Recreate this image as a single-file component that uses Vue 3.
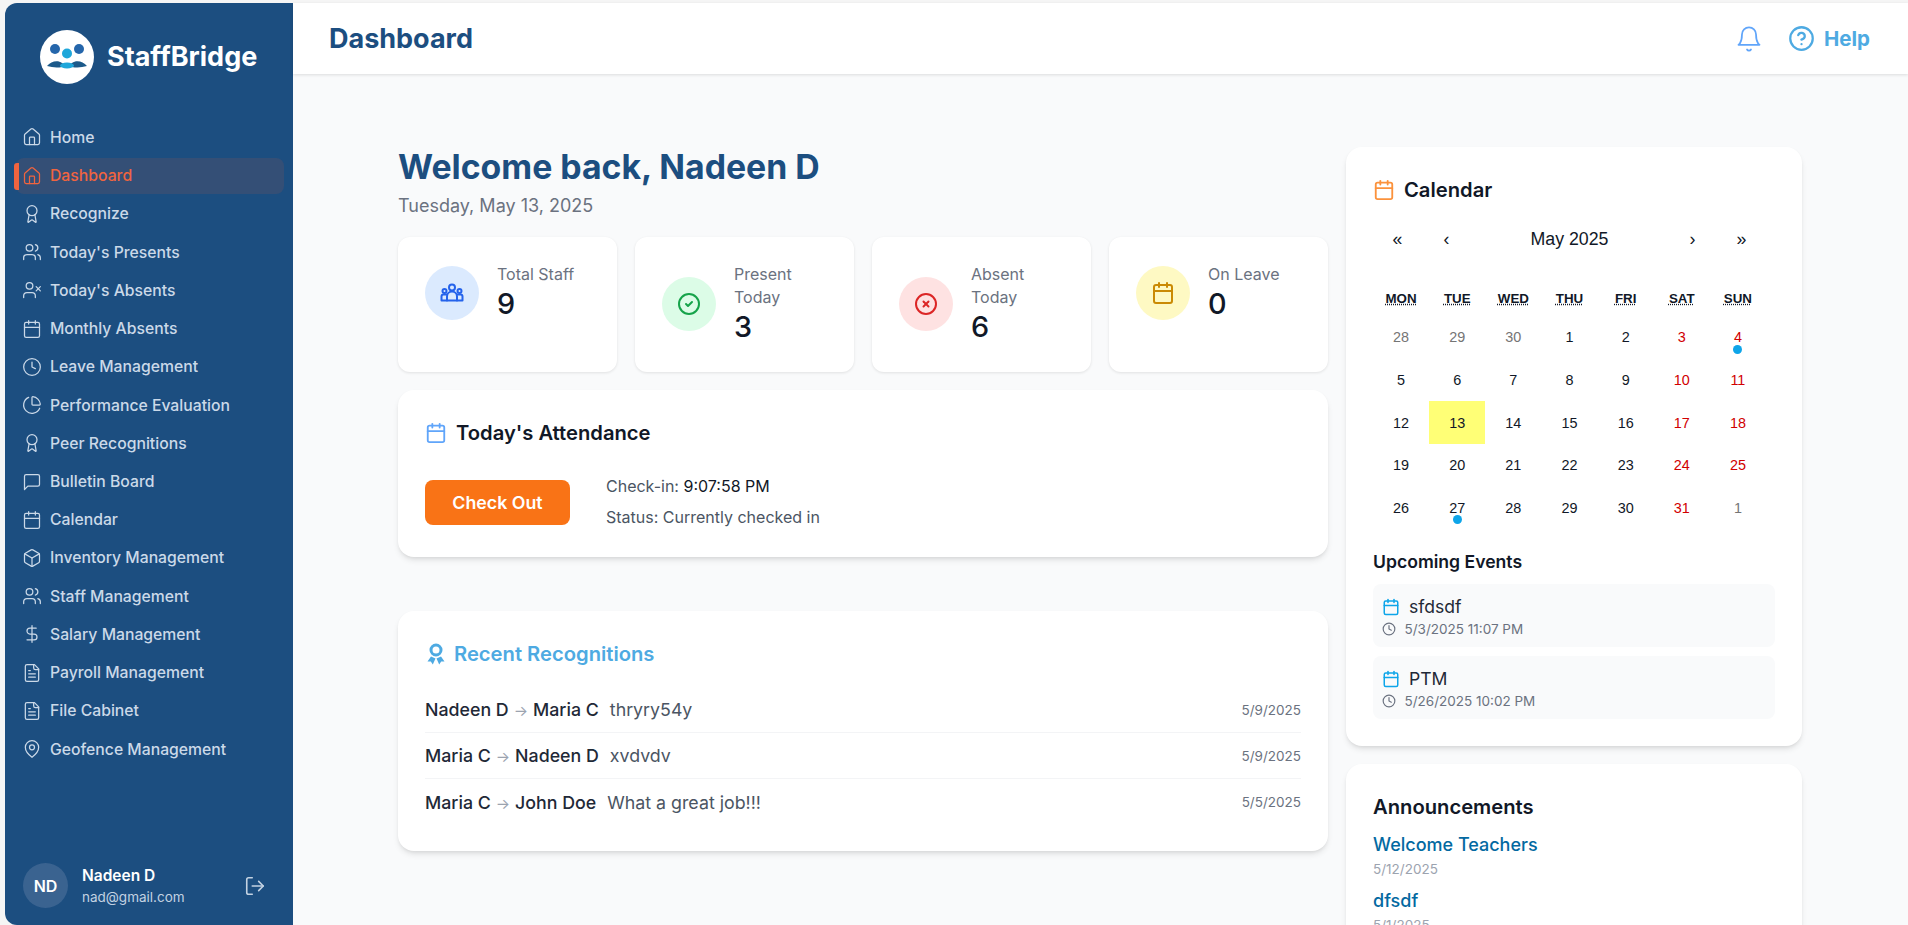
<template>
  <div class="layout">
    <aside class="sidebar">
      <div class="brand">
        <svg class="logo" width="54" height="54" viewBox="0 0 54 54">
          <circle cx="27" cy="27" r="27" fill="#fff" />
          <circle cx="15" cy="19" r="5" fill="#2566ab" />
          <circle cx="39" cy="19" r="5" fill="#2566ab" />
          <circle cx="27" cy="23.5" r="5" fill="#1fa7da" />
          <path d="M7 36C11 31 18 30 22 33C25 35 29 35 32 33C36 30 43 31 47 36C42 37.500 37 38 32 37C29 36.500 25 36.500 22 37C17 38 12 37.500 7 36Z" fill="#1c5a8a" />
          <ellipse cx="27" cy="35.500" rx="7" ry="3" fill="#1fa7da" />
        </svg>
        <span class="brand-name">StaffBridge</span>
      </div>

      <nav class="nav">
        <a v-for="item in navItems" :key="item.label" class="nav-item" :class="{ active: item.active }">
          <Icon :name="item.icon" :size="20" :sw="1.5" />
          <span>{{ item.label }}</span>
        </a>
      </nav>

      <div class="user">
        <div class="avatar">ND</div>
        <div class="user-info">
          <div class="user-name">Nadeen D</div>
          <div class="user-mail">nad@gmail.com</div>
        </div>
        <Icon class="logout" name="logout" :size="22" :sw="1.75" />
      </div>
    </aside>

    <div class="page">
      <header class="topbar">
        <h1 class="page-title">Dashboard</h1>
        <div class="top-actions">
          <Icon class="bell" name="bell" :size="28" :sw="1.5" />
          <a class="help">
            <Icon name="help" :size="27" :sw="2" />
            <span>Help</span>
          </a>
        </div>
      </header>

      <main class="content">
        <div class="col-left">
          <h2 class="welcome">Welcome back, Nadeen D</h2>
          <p class="date-line">Tuesday, May 13, 2025</p>

          <section class="stats">
            <div v-for="stat in stats" :key="stat.label" class="stat">
              <div class="stat-inner">
                <div class="stat-icon" :class="stat.tone">
                  <Icon :name="stat.icon" :size="24" :sw="2" />
                </div>
                <div>
                  <div class="stat-label">{{ stat.label }}</div>
                  <div class="stat-value">{{ stat.value }}</div>
                </div>
              </div>
            </div>
          </section>

          <section class="card attendance">
            <h3 class="card-title">
              <Icon class="blue" name="calendar" :size="22" :sw="2" />
              Today's Attendance
            </h3>
            <div class="attendance-body">
              <button class="checkout">Check Out</button>
              <div class="attendance-info">
                <div>Check-in: <span class="time">9:07:58 PM</span></div>
                <div>Status: Currently checked in</div>
              </div>
            </div>
          </section>

          <section class="card recognitions">
            <h3 class="card-title sky">
              <svg class="ribbon" width="18" height="22" viewBox="0 0 18 22">
                <circle cx="9" cy="7" r="5" fill="none" stroke="currentColor" stroke-width="3" />
                <path d="M4 13.500L0.500 18.500H3.800L5.800 21.500L8.500 15.500Z" fill="currentColor" />
                <path d="M14 13.500L17.500 18.500H14.200L12.200 21.500L9.500 15.500Z" fill="currentColor" />
              </svg>
              Recent Recognitions
            </h3>
            <div v-for="rec in recognitions" :key="rec.message" class="rec-row">
              <div class="rec-main">
                <span class="rec-name">{{ rec.from }}</span>
                <span class="rec-arrow">→</span>
                <span class="rec-name">{{ rec.to }}</span>
                <span class="rec-message">{{ rec.message }}</span>
              </div>
              <span class="rec-date">{{ rec.date }}</span>
            </div>
          </section>
        </div>

        <div class="col-right">
          <section class="card calendar-card">
            <h3 class="card-title calendar-title">
              <Icon class="orange" name="calendar" :size="22" :sw="2" />
              Calendar
            </h3>
            <div class="calendar">
              <div class="cal-nav">
                <button>«</button>
                <button>‹</button>
                <button class="cal-month">May 2025</button>
                <button>›</button>
                <button>»</button>
              </div>
              <div class="cal-weekdays">
                <div v-for="wd in weekdays" :key="wd"><abbr>{{ wd }}</abbr></div>
              </div>
              <div class="cal-days">
                <div v-for="day in days" :key="day.key" class="tile" :class="day.classes">
                  {{ day.n }}
                  <span v-if="day.dot" class="dot"></span>
                </div>
              </div>
            </div>

            <h4 class="events-title">Upcoming Events</h4>
            <div v-for="ev in events" :key="ev.title" class="event">
              <div class="event-name">
                <Icon class="event-cal" name="calendar" :size="18" :sw="2" />
                {{ ev.title }}
              </div>
              <div class="event-time">
                <Icon name="clock" :size="14" :sw="2" />
                {{ ev.time }}
              </div>
            </div>
          </section>

          <section class="card announcements">
            <h3 class="ann-title">Announcements</h3>
            <div v-for="ann in announcements" :key="ann.title" class="ann">
              <a class="ann-link">{{ ann.title }}</a>
              <div class="ann-date">{{ ann.date }}</div>
            </div>
          </section>
        </div>
      </main>
    </div>
  </div>
</template>

<script setup>
import { h } from 'vue';

const circle = (cx, cy, r) => `M${cx - r} ${cy}a${r} ${r} 0 1 0 ${2 * r} 0a${r} ${r} 0 1 0 ${-2 * r} 0`;

const icons = {
  home: ['M15 21v-8a1 1 0 0 0-1-1h-4a1 1 0 0 0-1 1v8', 'M3 10a2 2 0 0 1 .709-1.528l7-5.999a2 2 0 0 1 2.582 0l7 5.999A2 2 0 0 1 21 10v9a2 2 0 0 1-2 2H5a2 2 0 0 1-2-2z'],
  award: [circle(12, 8, 6), 'm15.477 12.89 1.515 8.526a.5.5 0 0 1-.81.47l-3.58-2.687a1 1 0 0 0-1.197 0l-3.586 2.686a.5.5 0 0 1-.81-.469l1.514-8.526'],
  users: ['M16 21v-2a4 4 0 0 0-4-4H6a4 4 0 0 0-4 4v2', circle(9, 7, 4), 'M22 21v-2a4 4 0 0 0-3-3.87', 'M16 3.13a4 4 0 0 1 0 7.75'],
  userX: ['M16 21v-2a4 4 0 0 0-4-4H6a4 4 0 0 0-4 4v2', circle(9, 7, 4), 'M17 8l5 5', 'M22 8l-5 5'],
  calendar: ['M8 2v4', 'M16 2v4', 'M5 4h14a2 2 0 0 1 2 2v14a2 2 0 0 1-2 2H5a2 2 0 0 1-2-2V6a2 2 0 0 1 2-2z', 'M3 10h18'],
  clock: [circle(12, 12, 10), 'M12 6v6l4 2'],
  pie: ['M21 12c.552 0 1.005-.449.95-.998a10 10 0 0 0-8.953-8.951c-.55-.055-.998.398-.998.95v8a1 1 0 0 0 1 1z', 'M21.21 15.89A10 10 0 1 1 8 2.83'],
  message: ['M21 15a2 2 0 0 1-2 2H7l-4 4V5a2 2 0 0 1 2-2h14a2 2 0 0 1 2 2z'],
  box: ['M21 8a2 2 0 0 0-1-1.73l-7-4a2 2 0 0 0-2 0l-7 4A2 2 0 0 0 3 8v8a2 2 0 0 0 1 1.73l7 4a2 2 0 0 0 2 0l7-4A2 2 0 0 0 21 16Z', 'm3.3 7 8.7 5 8.7-5', 'M12 22V12'],
  dollar: ['M12 2v20', 'M17 5H9.5a3.5 3.5 0 0 0 0 7h5a3.5 3.5 0 0 1 0 7H6'],
  file: ['M15 2H6a2 2 0 0 0-2 2v16a2 2 0 0 0 2 2h12a2 2 0 0 0 2-2V7Z', 'M14 2v4a2 2 0 0 0 2 2h4', 'M10 9H8', 'M16 13H8', 'M16 17H8'],
  pin: ['M20 10c0 6-8 12-8 12s-8-6-8-12a8 8 0 0 1 16 0Z', circle(12, 10, 3)],
  logout: ['M9 21H5a2 2 0 0 1-2-2V5a2 2 0 0 1 2-2h4', 'M16 17l5-5-5-5', 'M21 12H9'],
  bell: ['M6 8a6 6 0 0 1 12 0c0 7 3 9 3 9H3s3-2 3-9', 'M10.3 21a1.94 1.94 0 0 0 3.4 0'],
  help: [circle(12, 12, 10), 'M9.09 9a3 3 0 0 1 5.83 1c0 2-3 3-3 3', 'M12 17h.01'],
  check: [circle(12, 12, 10), 'm9 12 2 2 4-4'],
  cross: [circle(12, 12, 10), 'm14.5 9.500-5 5', 'm9.500 9.500 5 5'],
  group: [circle(12, 6.5, 3), circle(4.5, 10, 2), circle(19.5, 10, 2), 'M7 19.500v-4a5 5 0 0 1 10 0v4', 'M7 13.500H3.500a2 2 0 0 0-2 2v4h21v-4a2 2 0 0 0-2-2H17']
};

// small local icon component so each svg doesn't need repeating
const Icon = (props) => h('svg', {
  width: props.size,
  height: props.size,
  viewBox: '0 0 24 24',
  fill: 'none',
  stroke: 'currentColor',
  'stroke-width': props.sw,
  'stroke-linecap': 'round',
  'stroke-linejoin': 'round'
}, icons[props.name].map((d) => h('path', { d })));
Icon.props = ['name', 'size', 'sw'];

const navItems = [
  { label: 'Home', icon: 'home' },
  { label: 'Dashboard', icon: 'home', active: true },
  { label: 'Recognize', icon: 'award' },
  { label: "Today's Presents", icon: 'users' },
  { label: "Today's Absents", icon: 'userX' },
  { label: 'Monthly Absents', icon: 'calendar' },
  { label: 'Leave Management', icon: 'clock' },
  { label: 'Performance Evaluation', icon: 'pie' },
  { label: 'Peer Recognitions', icon: 'award' },
  { label: 'Bulletin Board', icon: 'message' },
  { label: 'Calendar', icon: 'calendar' },
  { label: 'Inventory Management', icon: 'box' },
  { label: 'Staff Management', icon: 'users' },
  { label: 'Salary Management', icon: 'dollar' },
  { label: 'Payroll Management', icon: 'file' },
  { label: 'File Cabinet', icon: 'file' },
  { label: 'Geofence Management', icon: 'pin' }
];

const stats = [
  { label: 'Total Staff', value: 9, icon: 'group', tone: 'tone-blue' },
  { label: 'Present Today', value: 3, icon: 'check', tone: 'tone-green' },
  { label: 'Absent Today', value: 6, icon: 'cross', tone: 'tone-red' },
  { label: 'On Leave', value: 0, icon: 'calendar', tone: 'tone-yellow' }
];

const recognitions = [
  { from: 'Nadeen D', to: 'Maria C', message: 'thryry54y', date: '5/9/2025' },
  { from: 'Maria C', to: 'Nadeen D', message: 'xvdvdv', date: '5/9/2025' },
  { from: 'Maria C', to: 'John Doe', message: 'What a great job!!!', date: '5/5/2025' }
];

const weekdays = ['MON', 'TUE', 'WED', 'THU', 'FRI', 'SAT', 'SUN'];

// April 28 to June 1, laid out monday first
const days = [];
for (let i = 0; i < 35; i++) {
  const n = i < 3 ? 28 + i : i === 34 ? 1 : i - 2;
  const other = i < 3 || i === 34;
  const weekend = i % 7 >= 5;
  days.push({
    key: i,
    n,
    dot: i === 6 || i === 29,
    classes: {
      other,
      weekend: weekend && !other,
      today: i === 15
    }
  });
}

const events = [
  { title: 'sfdsdf', time: '5/3/2025 11:07 PM' },
  { title: 'PTM', time: '5/26/2025 10:02 PM' }
];

const announcements = [
  { title: 'Welcome Teachers', date: '5/12/2025' },
  { title: 'dfsdf', date: '5/1/2025' }
];
</script>

<style>
html, body {
  margin: 0;
  height: 100%;
  overflow: hidden;
  background: #f5f5f5;
}
</style>

<style scoped>
* {
  box-sizing: border-box;
}

.layout {
  display: flex;
  height: 100vh;
  padding: 3px 0 0 5px;
  font-family: Inter, "Liberation Sans", sans-serif;
  color: #111827;
}

.sidebar {
  display: flex;
  flex-direction: column;
  flex: 0 0 288px;
  background: #1c4e80;
  border-radius: 12px 0 0 12px;
}

.brand {
  display: flex;
  align-items: flex-start;
  gap: 13px;
  padding: 27px 0 0 35px;
  height: 116.400px;
}

.brand-name {
  color: #fff;
  font-size: 27px;
  font-weight: 700;
  line-height: 54px;
}

.nav {
  display: flex;
  flex-direction: column;
  gap: 2.240px;
  padding: 0 9px 0 11px;
}

.nav-item {
  position: relative;
  display: flex;
  align-items: center;
  gap: 8px;
  height: 36px;
  padding-left: 6px;
  border-radius: 8px;
  color: #cbd9e8;
  font-size: 15.750px;
  font-weight: 500;
}

.nav-item.active {
  background: #344f76;
  color: #f0643f;
}

.nav-item.active::before {
  content: "";
  position: absolute;
  left: -2px;
  top: 5px;
  width: 5px;
  height: 27px;
  background: #f0643f;
  border-radius: 3px 0 0 3px;
}

.user {
  display: flex;
  align-items: center;
  margin-top: auto;
  padding: 0 27px 17px 18px;
}

.avatar {
  display: flex;
  align-items: center;
  justify-content: center;
  width: 45px;
  height: 45px;
  border-radius: 50%;
  background: #3a6390;
  color: #fff;
  font-size: 16px;
  font-weight: 600;
}

.user-info {
  flex: 1;
  margin-left: 14px;
}

.user-name {
  color: #fff;
  font-size: 15.500px;
  font-weight: 600;
  line-height: 23px;
}

.user-mail {
  color: #c3d2e2;
  font-size: 13.500px;
  line-height: 21px;
}

.logout {
  color: #c3d2e2;
}

.page {
  flex: 1;
  min-width: 0;
  display: flex;
  flex-direction: column;
  background: #f9fafb;
}

.topbar {
  display: flex;
  align-items: center;
  justify-content: space-between;
  flex: 0 0 71px;
  padding: 0 38px 0 36px;
  background: #fff;
  box-shadow: 0 1px 3px rgba(0, 0, 0, 0.12);
  z-index: 1;
}

.page-title {
  margin: 0;
  color: #1c4e80;
  font-size: 27px;
  font-weight: 700;
}

.top-actions {
  display: flex;
  align-items: center;
  gap: 25px;
}

.bell {
  color: #60a5fa;
}

.help {
  display: flex;
  align-items: center;
  gap: 9px;
  color: #4eaae2;
  font-size: 20.500px;
  font-weight: 700;
}

.content {
  flex: 1;
  min-height: 0;
  overflow: hidden;
  display: grid;
  grid-template-columns: 930px 456px;
  gap: 18px;
  padding: 73px 0 0 105px;
}

.welcome {
  margin: 0;
  color: #1c4e80;
  font-size: 33.800px;
  font-weight: 700;
  line-height: 40px;
}

.date-line {
  margin: 5px 0 17px;
  color: #6b7280;
  font-size: 18px;
  line-height: 28px;
}

.stats {
  display: grid;
  grid-template-columns: repeat(4, 1fr);
  gap: 18px;
}

.stat {
  padding: 26px 27px 27px;
  background: #fff;
  border-radius: 12px;
  box-shadow: 0 1px 3px rgba(0, 0, 0, 0.1);
}

.stat-inner {
  display: flex;
  align-items: center;
  gap: 18px;
}

.stat-icon {
  display: flex;
  align-items: center;
  justify-content: center;
  flex: 0 0 54px;
  height: 54px;
  border-radius: 50%;
}

.tone-blue { background: #dbeafe; color: #2563eb; }
.tone-green { background: #dcfce7; color: #16a34a; }
.tone-red { background: #fee2e2; color: #dc2626; }
.tone-yellow { background: #fef9c3; color: #ca8a04; }

.stat-label {
  color: #6b7280;
  font-size: 16px;
  font-weight: 400;
  line-height: 23px;
}

.stat-value {
  font-size: 28.800px;
  font-weight: 500;
  line-height: 36px;
}

.card {
  background: #fff;
  border-radius: 16px;
  box-shadow: 0 4px 6px -1px rgba(0, 0, 0, 0.1), 0 2px 4px -2px rgba(0, 0, 0, 0.1);
}

.card-title {
  display: flex;
  align-items: center;
  gap: 9px;
  margin: 0;
  font-size: 20.200px;
  font-weight: 600;
  line-height: 32px;
}

.blue { color: #60a5fa; }
.orange { color: #fb923c; }
.sky { color: #4eaae2; }

.attendance {
  margin-top: 18px;
  padding: 27px;
  padding-bottom: 32px;
}

.attendance-body {
  display: flex;
  align-items: center;
  gap: 36px;
  height: 45px;
  margin-top: 31px;
}

.checkout {
  width: 145px;
  height: 45px;
  border: none;
  border-radius: 8px;
  background: #f97316;
  color: #fff;
  font-family: inherit;
  font-size: 17.800px;
  font-weight: 600;
}

.attendance-info {
  display: flex;
  flex-direction: column;
  gap: 6.500px;
  margin-top: -2px;
  color: #4b5563;
  font-size: 16px;
  line-height: 24px;
}

.time {
  color: #111827;
}

.recognitions {
  margin-top: 54px;
  padding: 28px 27px 26px;
}

.recognitions .card-title {
  margin-bottom: 18px;
  line-height: 30px;
}

.ribbon {
  margin-left: 2px;
}

.rec-row {
  display: flex;
  align-items: center;
  justify-content: space-between;
  height: 46px;
  border-bottom: 1px solid #f3f4f6;
}

.rec-row:last-child {
  border-bottom: none;
}

.rec-main {
  font-size: 17.800px;
}

.rec-name {
  color: #1f2937;
  font-weight: 500;
}

.rec-arrow {
  margin: 0 5px;
  color: #9ca3af;
  font-size: 15px;
}

.rec-message {
  margin-left: 11px;
  color: #4b5563;
}

.rec-date {
  color: #6b7280;
  font-size: 13.500px;
}

.calendar-card {
  padding: 27px;
}

.calendar {
  width: 393px;
  margin-top: 11px;
  font-family: "Liberation Sans", Arial, sans-serif;
}

.cal-nav {
  display: grid;
  grid-template-columns: 49px 49px 1fr 49px 49px;
  height: 44px;
  margin-bottom: 20px;
}

.cal-nav button {
  padding: 0;
  border: none;
  background: none;
  color: #111827;
  font-family: inherit;
  font-size: 17.780px;
}

.cal-weekdays {
  display: grid;
  grid-template-columns: repeat(7, 1fr);
  align-items: center;
  height: 35px;
  text-align: center;
  font-size: 13.330px;
  font-weight: 700;
}

.cal-weekdays abbr {
  text-decoration: underline dotted;
}

.cal-days {
  display: grid;
  grid-template-columns: repeat(7, 1fr);
  grid-auto-rows: 42.670px;
}

.tile {
  position: relative;
  display: flex;
  align-items: center;
  justify-content: center;
  color: #111827;
  font-size: 14.400px;
}

.tile.other { color: #757575; }
.tile.weekend { color: #d10000; }
.tile.today { background: #ffff76; }

.dot {
  position: absolute;
  left: 50%;
  bottom: 5px;
  width: 9px;
  height: 9px;
  margin-left: -4.500px;
  border-radius: 50%;
  background: #0ea5e9;
}

.events-title {
  margin: 20px 0 10px;
  font-size: 17.600px;
  font-weight: 600;
  line-height: 25px;
}

.event {
  height: 63px;
  margin-top: 9px;
  padding: 11px 9px 0;
  background: #f9fafb;
  border-radius: 8px;
}

.events-title + .event {
  margin-top: 0;
}

.event-name {
  display: flex;
  align-items: center;
  gap: 9px;
  color: #1f2937;
  font-size: 17.600px;
  line-height: 24px;
}

.event-cal {
  color: #0ea5e9;
}

.event-time {
  display: flex;
  align-items: center;
  gap: 8.500px;
  margin-top: 1px;
  color: #6b7280;
  font-size: 13.500px;
  line-height: 18px;
}

.announcements {
  margin-top: 18px;
  padding: 27px;
}

.ann-title {
  margin: 0 0 9px;
  font-size: 20.200px;
  font-weight: 600;
  line-height: 32px;
}

.ann {
  margin-bottom: 8px;
}

.ann-link {
  display: block;
  color: #0369a1;
  font-size: 18px;
  font-weight: 500;
  line-height: 26px;
}

.ann-date {
  color: #9ca3af;
  font-size: 13.500px;
  line-height: 22px;
}
</style>
